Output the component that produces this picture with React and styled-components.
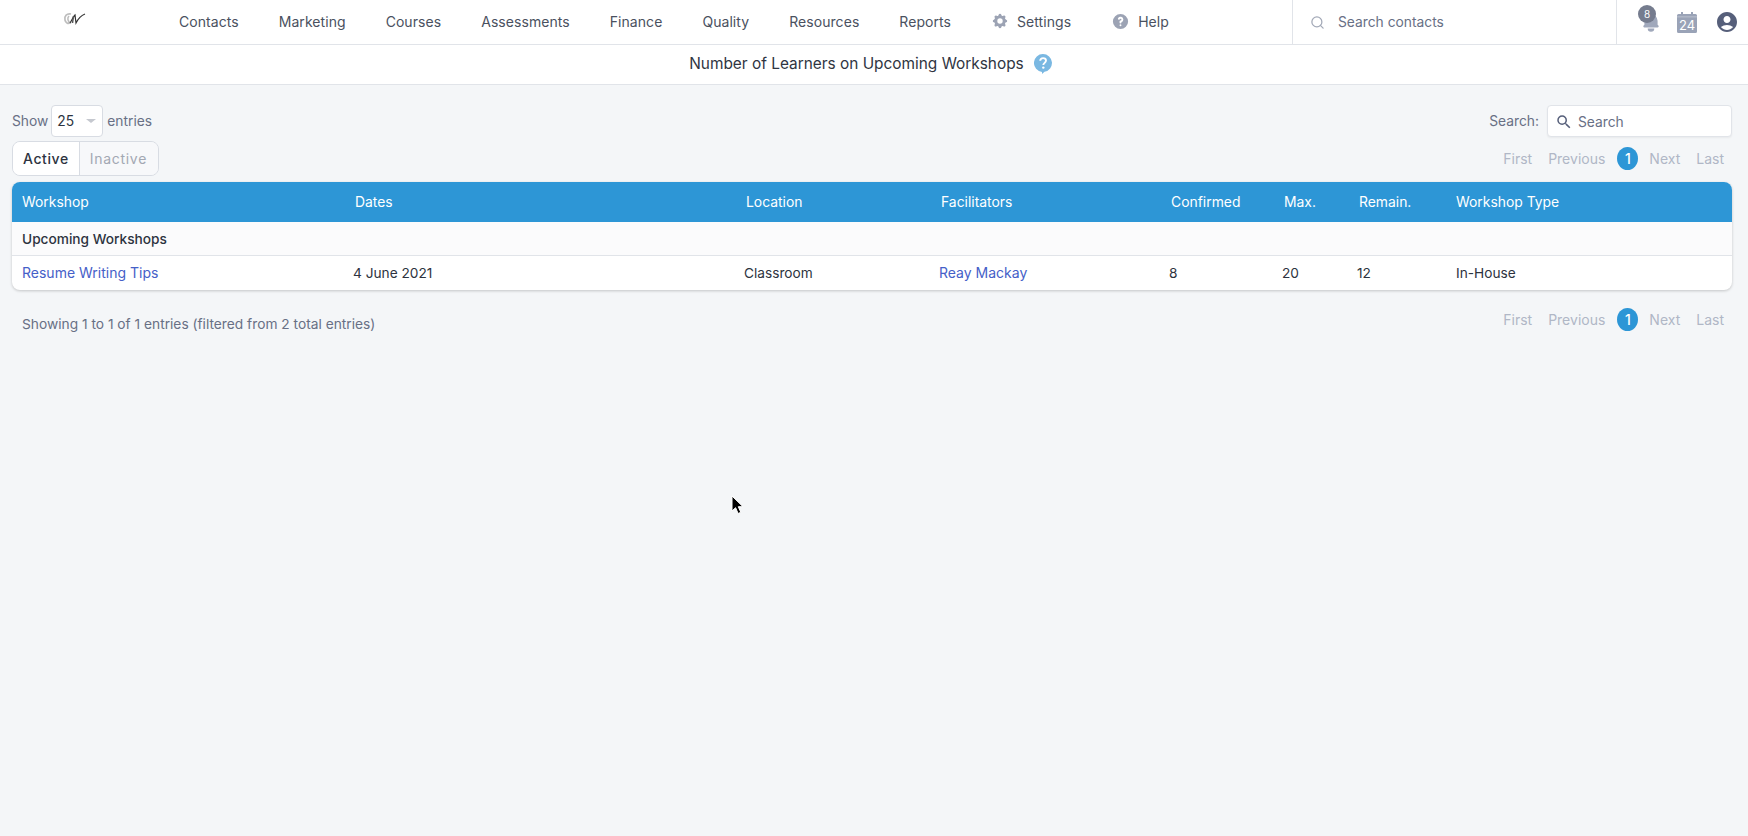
import React from "react";
import styled, { createGlobalStyle } from "styled-components";
import { HiBell, HiCog, HiQuestionMarkCircle } from "react-icons/hi";
import { MdAccountCircle, MdSearch } from "react-icons/md";
import { Search as SearchIcon } from "lucide-react";

const NAV_ITEMS = ["Contacts", "Marketing", "Courses", "Assessments", "Finance", "Quality", "Resources", "Reports"];

const COLUMNS = [
  { label: "Workshop", width: 331 },
  { label: "Dates", width: 391 },
  { label: "Location", width: 195 },
  { label: "Facilitators", width: 230 },
  { label: "Confirmed", width: 113 },
  { label: "Max.", width: 75 },
  { label: "Remain.", width: 99 },
  { label: "Workshop Type", width: 286 },
];

const GlobalStyle = createGlobalStyle`
  html, body {
    margin: 0;
    height: 100%;
    background: #f4f6f8;
  }
  body {
    font-family: Inter, "Liberation Sans", sans-serif;
    font-size: 14px;
    color: #2d3340;
  }
`;

const Pagination = () => (
  <Pager>
    <PageLink>First</PageLink>
    <PageLink>Previous</PageLink>
    <CurrentPage>1</CurrentPage>
    <PageLink>Next</PageLink>
    <PageLink>Last</PageLink>
  </Pager>
);

const App = () => {
  return (
    <Page>
      <GlobalStyle />
      <TopNav>
        <LogoBox>
          <LogoMark width="24" height="14" viewBox="0 0 24 14">
            <path d="M8 2C4 1 1 4 2 8c.6 3 3 4 5 3C5 9 4 6 6 4" fill="none" stroke="#bdbdbd" strokeWidth="1.700" />
            <path d="M7 11c2-3 3-6 5-8l1 8c2-4 4-7 9-9" fill="none" stroke="#333" strokeWidth="1.200" />
            <path d="M10.500 4l-1 7" fill="none" stroke="#555" strokeWidth="1.500" />
          </LogoMark>
        </LogoBox>
        <NavLinks>
          {NAV_ITEMS.map((item) => (
            <NavLink key={item}>{item}</NavLink>
          ))}
          <NavLink>
            <HiCog size={18} color="#9ca3b4" />
            Settings
          </NavLink>
          <NavLink>
            <HiQuestionMarkCircle size={19} color="#9ca3b4" />
            Help
          </NavLink>
        </NavLinks>
        <ContactSearch>
          <SearchIcon size={15} color="#a3a9b7" strokeWidth={2} />
          Search contacts
        </ContactSearch>
        <NavIcons>
          <BellWrap>
            <HiBell size={22} color="#a0a8bb" />
            <BellBadge>8</BellBadge>
          </BellWrap>
          <CalendarWrap>
            <svg width="20" height="22" viewBox="0 0 20 22">
              <path
                d="M1.5 3H4V1h2v2h8V1h2v2h2.5A1.5 1.5 0 0 1 20 4.5v16a1.5 1.5 0 0 1-1.5 1.5h-17A1.5 1.5 0 0 1 0 20.500v-16A1.500 1.500 0 0 1 1.500 3z"
                fill="#9aa3b7"
              />
              <rect x="0" y="5.500" width="20" height="0.800" fill="#c4c9d5" />
            </svg>
            <CalendarDay>24</CalendarDay>
          </CalendarWrap>
          <MdAccountCircle size={24} color="#565f7a" />
        </NavIcons>
      </TopNav>

      <TitleBar>
        Number of Learners on Upcoming Workshops
        <svg width="18" height="20" viewBox="0 0 18 20">
          <path
            d="M9 0a9 9 0 0 1 1.500 17.870L8 20v-2.050A9 9 0 0 1 9 0z"
            fill="#7ab8e2"
          />
          <path
            d="M6.200 6.800C6.300 5.200 7.500 4.100 9.100 4.100c1.700 0 2.900 1.100 2.900 2.500 0 2.200-2.700 2.300-2.700 4.400"
            fill="none"
            stroke="#fff"
            strokeWidth="1.900"
          />
          <circle cx="9.300" cy="13.600" r="1.200" fill="#fff" />
        </svg>
      </TitleBar>

      <Content>
        <ControlRow>
          <LengthControl>
            Show
            <FakeSelect>
              25
              <Caret />
            </FakeSelect>
            entries
          </LengthControl>
          <SearchControl>
            Search:
            <SearchBox>
              <MdSearch size={18} color="#565f7a" />
              Search
            </SearchBox>
          </SearchControl>
        </ControlRow>

        <TabsRow>
          <Tabs>
            <Tab $active>Active</Tab>
            <Tab>Inactive</Tab>
          </Tabs>
          <Pagination />
        </TabsRow>

        <TableCard>
          <Table>
            <colgroup>
              {COLUMNS.map((col) => (
                <col key={col.label} width={col.width} />
              ))}
            </colgroup>
            <thead>
              <tr>
                {COLUMNS.map((col, i) => (
                  <HeadCell key={col.label} $flush={i === 0 || i === 7}>
                    {col.label}
                  </HeadCell>
                ))}
              </tr>
            </thead>
            <tbody>
              <tr>
                <GroupCell colSpan={8}>Upcoming Workshops</GroupCell>
              </tr>
              <tr>
                <Cell>
                  <TableLink>Resume Writing Tips</TableLink>
                </Cell>
                <Cell>4 June 2021</Cell>
                <Cell>Classroom</Cell>
                <Cell>
                  <TableLink>Reay Mackay</TableLink>
                </Cell>
                <Cell>8</Cell>
                <Cell>20</Cell>
                <Cell>12</Cell>
                <Cell>In-House</Cell>
              </tr>
            </tbody>
          </Table>
        </TableCard>

        <FooterRow>
          <Summary>Showing 1 to 1 of 1 entries (filtered from 2 total entries)</Summary>
          <Pagination />
        </FooterRow>
      </Content>

      <Cursor width="14" height="20" viewBox="0 0 14 20">
        <path d="M1 1v15l3.600-3.300 2.500 5.800 2.700-1.200-2.500-5.600H12z" fill="#000" stroke="#fff" strokeWidth="1" />
      </Cursor>
    </Page>
  );
};

const Page = styled.div`
  position: relative;
  min-height: 836px;
  overflow: hidden;
`;

const TopNav = styled.header`
  display: flex;
  align-items: stretch;
  height: 44px;
  background: #fff;
  border-bottom: 1px solid #e1e4e9;
`;

const LogoBox = styled.div`
  display: flex;
  align-items: center;
  justify-content: center;
  width: 150px;
  margin-right: 29px;
`;

const LogoMark = styled.svg`
  margin-top: -7px;
`;

const NavLinks = styled.nav`
  display: flex;
  align-items: center;
  gap: 40px;
  flex: 1;
  padding-bottom: 2px;
`;

const NavLink = styled.a`
  display: flex;
  align-items: center;
  gap: 8px;
  color: #4a5160;
  letter-spacing: 0.06px;
`;

const ContactSearch = styled.div`
  display: flex;
  align-items: center;
  gap: 13px;
  width: 325px;
  box-sizing: border-box;
  padding-left: 17px;
  border-left: 1px solid #e1e4e9;
  border-right: 1px solid #e1e4e9;
  color: #687085;
  font-size: 13.8px;
`;

const NavIcons = styled.div`
  display: flex;
  align-items: center;
  width: 131px;
  padding-left: 23px;
  box-sizing: border-box;
`;

const BellWrap = styled.div`
  position: relative;
  display: flex;
  margin-top: 2px;
`;

const BellBadge = styled.span`
  position: absolute;
  top: -7px;
  left: -2px;
  width: 18px;
  height: 18px;
  border-radius: 50%;
  background: #757c8e;
  color: #fff;
  font-size: 10px;
  line-height: 18px;
  text-align: center;
`;

const CalendarWrap = styled.div`
  position: relative;
  display: flex;
  margin-left: 15px;
  margin-right: 18px;
`;

const CalendarDay = styled.span`
  position: absolute;
  left: 0;
  right: 0;
  top: 7px;
  color: #fff;
  font-size: 13px;
  line-height: 15px;
  text-align: center;
`;

const TitleBar = styled.div`
  display: flex;
  align-items: center;
  justify-content: center;
  gap: 10px;
  height: 40px;
  box-sizing: border-box;
  padding: 0 7px 2px 0;
  background: #fff;
  border-bottom: 1px solid #e1e4e9;
  color: #2f3542;
  font-size: 15.4px;
`;

const Content = styled.main`
  padding: 20px 16px 0 12px;
`;

const ControlRow = styled.div`
  display: flex;
  align-items: center;
  justify-content: space-between;
  height: 32px;
  font-size: 13.8px;
`;

const LengthControl = styled.label`
  display: flex;
  align-items: center;
  gap: 3px;
  padding-bottom: 1px;
  color: #687085;
`;

const FakeSelect = styled.div`
  display: flex;
  align-items: center;
  justify-content: space-between;
  width: 52px;
  height: 32px;
  box-sizing: border-box;
  margin: 0 1px -1px 0;
  padding: 0 6px 0 5px;
  background: #fff;
  border: 1px solid #d8dce3;
  border-radius: 4px;
  color: #2d3340;
`;

const Caret = styled.span`
  width: 0;
  height: 0;
  border-left: 5px solid transparent;
  border-right: 5px solid transparent;
  border-top: 4px solid #c5c8cf;
`;

const SearchControl = styled.label`
  display: flex;
  align-items: center;
  gap: 8px;
  color: #687085;
`;

const SearchBox = styled.div`
  display: flex;
  align-items: center;
  gap: 5px;
  width: 185px;
  height: 32px;
  box-sizing: border-box;
  padding: 1px 0 0 7px;
  background: #fff;
  border: 1px solid #e1e4e9;
  border-radius: 4px;
  box-shadow: 0 1px 2px rgba(0, 0, 0, 0.05);
  color: #687085;
`;

const TabsRow = styled.div`
  display: flex;
  align-items: center;
  justify-content: space-between;
  margin-top: 4px;
  height: 35px;
`;

const Tabs = styled.div`
  display: flex;
  height: 35px;
  box-sizing: border-box;
  border: 1px solid #d8dce3;
  border-radius: 8px;
  overflow: hidden;
`;

const Tab = styled.div`
  display: flex;
  align-items: center;
  padding: 0 ${(p) => (p.$active ? "10px" : "11px")} 0 10px;
  background: ${(p) => (p.$active ? "#fff" : "#f7f8fa")};
  color: ${(p) => (p.$active ? "#2d3340" : "#a3a8b3")};
  border-left: ${(p) => (p.$active ? "none" : "1px solid #d8dce3")};
  letter-spacing: ${(p) => (p.$active ? "0.6px" : "0.7px")};
  font-weight: ${(p) => (p.$active ? 500 : 400)};
`;

const Pager = styled.div`
  display: flex;
  align-items: center;
`;

const PageLink = styled.span`
  padding: 0 8px;
  color: #b0b7c6;
`;

const CurrentPage = styled.span`
  width: 21px;
  height: 23px;
  margin: 0 3px 0 4px;
  border-radius: 50%;
  background: #2d96d6;
  color: #fff;
  font-weight: 500;
  line-height: 23px;
  text-align: center;
`;

const TableCard = styled.div`
  margin-top: 6px;
  background: #fff;
  border-radius: 8px;
  overflow: hidden;
  box-shadow: 0 1px 3px rgba(0, 0, 0, 0.2);
`;

const Table = styled.table`
  width: 100%;
  table-layout: fixed;
  border-collapse: collapse;
`;

const HeadCell = styled.th`
  height: 40px;
  box-sizing: border-box;
  padding: 0 0 1px ${(p) => (p.$flush ? "10px" : "12px")};
  background: #2d96d6;
  color: #fff;
  font-size: 13.9px;
  font-weight: 400;
  text-align: left;
`;

const GroupCell = styled.td`
  height: 33px;
  padding: 0 0 0 10px;
  background: #fbfbfc;
  border-bottom: 1px solid #e1e4e9;
  color: #2d3340;
  font-size: 13.7px;
  font-weight: 500;
`;

const Cell = styled.td`
  height: 34px;
  box-sizing: border-box;
  padding: 0 0 0 10px;
  color: #2d3340;
  font-size: 13.7px;
`;

const TableLink = styled.a`
  color: #4560c8;
  font-size: 14px;
`;

const FooterRow = styled.div`
  display: flex;
  align-items: center;
  justify-content: space-between;
  margin-top: 18px;
  height: 24px;
`;

const Summary = styled.div`
  padding: 8px 0 0 10px;
  color: #687085;
  font-size: 13.75px;
`;

const Cursor = styled.svg`
  position: absolute;
  left: 731px;
  top: 495px;
`;

export default App;
